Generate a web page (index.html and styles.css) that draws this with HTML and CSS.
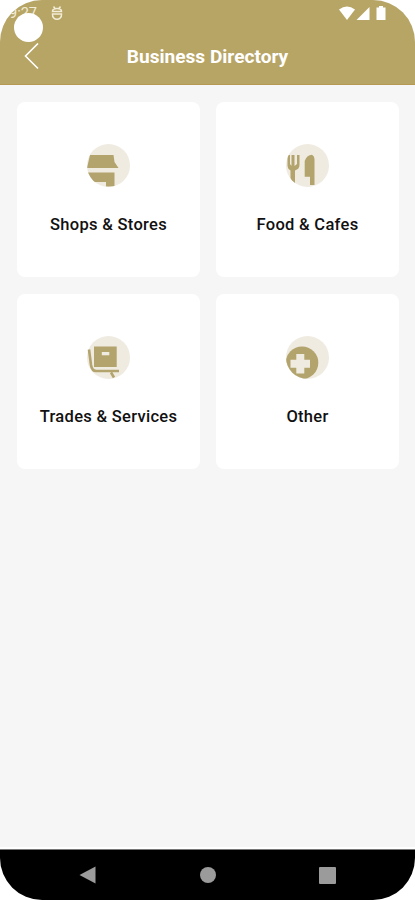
FILE: index.html
```html
<!DOCTYPE html>
<html lang="en">
<head>
  <meta charset="UTF-8">
  <meta name="viewport" content="width=device-width, initial-scale=1.0">
  <title>Business Directory</title>
  <link rel="stylesheet" href="styles.css">
</head>
<body>
  <div class="phone">
    <header class="header">
      <div class="status-bar">
        <span class="time">9:27</span>
        <svg class="debug-icon" width="12" height="15" viewBox="0 0 12 15">
          <path d="M2.5 0.500L4 2.500M9.500 0.500L8 2.500M1.500 5.500C1.500 1.500 10.500 1.500 10.500 5.500zM1.500 8H10.500C11 15 1 15 1.500 8z"/>
        </svg>
        <svg class="system-icons" width="48" height="15" viewBox="0 0 48 15">
          <path d="M0 3.5Q8 -2.5 16 3.5L8 14z"/>
          <path d="M30.5 1v13H17.5z"/>
          <path d="M40 1.5V0h4v1.5h2.500V14h-9V1.500z"/>
        </svg>
      </div>
      <span class="camera"></span>
      <div class="title-bar">
        <svg class="back" width="15" height="27" viewBox="0 0 15 27">
          <path d="M14 0.500L1.500 13L14 25.500"/>
        </svg>
        <h1>Business Directory</h1>
      </div>
    </header>

    <main class="grid">
      <div class="card">
        <svg class="icon" viewBox="0 0 43 43">
          <clipPath id="round"><circle cx="21.5" cy="21.5" r="21.5"/></clipPath>
          <circle class="disc" cx="21.5" cy="21.5" r="21.5"/>
          <g class="shape" clip-path="url(#round)">
            <path d="M3 11H26.5L27.5 18L31.5 24H0z"/>
            <path d="M0 28.5H27.5V42.5H19V38H0z"/>
          </g>
        </svg>
        <p>Shops &amp; Stores</p>
      </div>
      <div class="card">
        <svg class="icon" viewBox="0 0 43 43">
          <circle class="disc" cx="21.5" cy="21.5" r="21.5"/>
          <g class="shape" clip-path="url(#round)">
            <path d="M1.5 11H4V20L5.500 22V11H8.500V22L11 20V11H13.500V21Q13.500 25 9 26.500V40H4.500V26.500Q1.500 25 1.500 21z"/>
            <path d="M18.700 32.700V17Q21 10.700 26 10.700Q28.500 12 28.500 15V41H24V32.700z"/>
          </g>
        </svg>
        <p>Food &amp; Cafes</p>
      </div>
      <div class="card">
        <svg class="icon" viewBox="0 0 43 43">
          <circle class="disc" cx="21.5" cy="21.5" r="21.5"/>
          <rect class="shape" x="7" y="10.500" width="22.700" height="20.500"/>
          <rect class="disc" x="14.800" y="16" width="7.500" height="3.300"/>
          <path class="line" d="M2 13.500L4 29Q5 35 9 35H32M24 36.500L27 41.500"/>
        </svg>
        <p>Trades &amp; Services</p>
      </div>
      <div class="card">
        <svg class="icon" viewBox="0 0 43 43">
          <circle class="disc" cx="21.5" cy="21.5" r="21.5"/>
          <g clip-path="url(#round)">
            <circle class="shape" cx="16" cy="26.800" r="16.300"/>
            <path class="disc" d="M10.300 18H18.300V23.800H24V31.700H18.300V37.500H10.300V31.700H4.500V23.800H10.300z"/>
          </g>
        </svg>
        <p>Other</p>
      </div>
    </main>

    <nav class="nav-bar">
      <svg width="17" height="18" viewBox="0 0 17 18"><path d="M16.500 0.500V17.500L0.500 9z"/></svg>
      <svg width="16" height="16" viewBox="0 0 16 16"><circle cx="8" cy="8" r="8"/></svg>
      <svg width="17" height="17" viewBox="0 0 17 17"><rect width="17" height="17" rx="1"/></svg>
    </nav>
  </div>
</body>
</html>
```

FILE: styles.css
```css
* {
  box-sizing: border-box;
}

body {
  margin: 0;
  background-color: #fff;
  font-family: Roboto, sans-serif;
}

.phone {
  width: 415px;
  height: 900px;
  display: flex;
  flex-direction: column;
  background-color: #f6f6f6;
  border-radius: 42px;
  overflow: hidden;
}

.header {
  position: relative;
  height: 85px;
  background-color: #b7a566;
  border-bottom: 1px solid #b59a55;
  color: #fff;
}

.status-bar {
  display: flex;
  height: 28px;
  padding: 6px 28px 0 9px;
}

.time {
  width: 42px;
  font-size: 14.5px;
  line-height: 16px;
  color: #f3ecd6;
}

.debug-icon {
  fill: none;
  stroke: #f3ecd6;
  stroke-width: 1.5;
}

.system-icons {
  margin-left: auto;
  fill: #fff;
}

/* camera hole sits over the clock */
.camera {
  position: absolute;
  left: 14px;
  top: 13px;
  width: 29px;
  height: 29px;
  border-radius: 50%;
  background-color: #fff;
}

.title-bar {
  display: flex;
  align-items: center;
  height: 56px;
  padding: 0 24px;
}

.back {
  fill: none;
  stroke: #fff;
  stroke-width: 1.6;
}

.title-bar h1 {
  flex: 1;
  margin: 1px 15px 0 0;
  font-size: 19.1px;
  font-weight: 700;
  text-align: center;
}

.grid {
  flex: 1;
  display: grid;
  grid-template-columns: 1fr 1fr;
  grid-auto-rows: 175px;
  gap: 17px 16px;
  align-content: start;
  padding: 17px 16px 0 17px;
  border-bottom: 2px solid #fff;
}

.card {
  display: flex;
  flex-direction: column;
  align-items: center;
  padding-top: 42px;
  background-color: #fff;
  border-radius: 8px;
}

.card p {
  margin: 28px 0 0;
  font-size: 16.5px;
  font-weight: 500;
  line-height: 20px;
  letter-spacing: 0.3px;
  color: #111;
}

.icon {
  width: 43px;
  height: 43px;
}

.disc {
  fill: #efebe1;
}

.shape {
  fill: #b3a36c;
}

.line {
  fill: none;
  stroke: #b3a36c;
  stroke-width: 2.6;
}

.nav-bar {
  display: flex;
  justify-content: space-between;
  align-items: center;
  height: 51px;
  padding: 0 79px;
  background-color: #000;
  border-top: 1px solid #777;
}

.nav-bar svg {
  fill: #9b9b9b;
}
```
